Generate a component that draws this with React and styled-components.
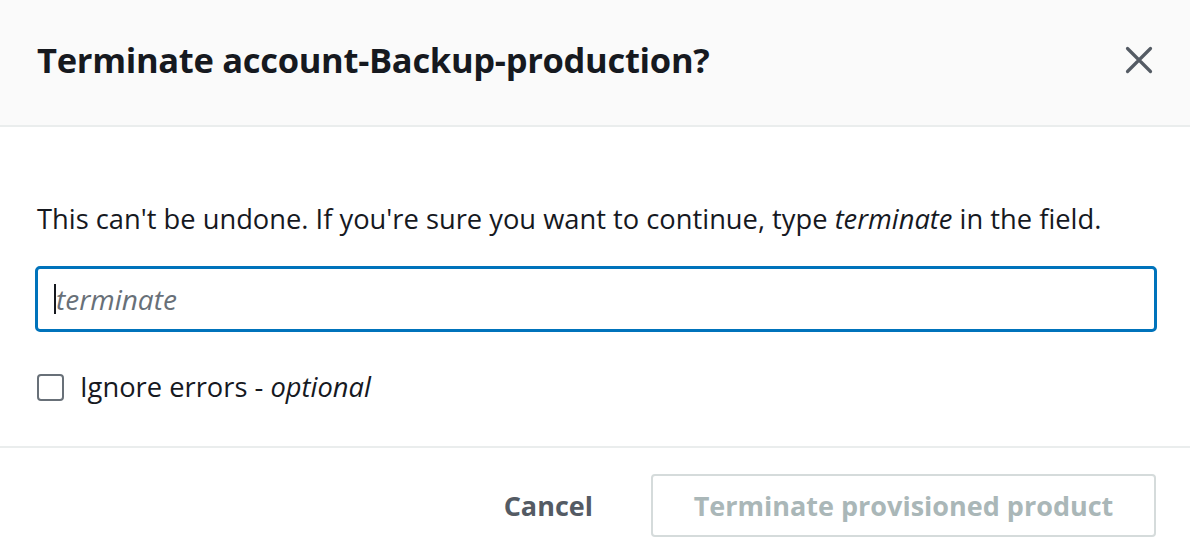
import styled, { createGlobalStyle } from "styled-components";

const GlobalStyle = createGlobalStyle`
  html, body {
    margin: 0;
    padding: 0;
    background: #ffffff;
    font-family: "Open Sans", "Noto Sans", Arial, sans-serif;
    color: #16191f;
  }
`;

const Modal = styled.div`
  width: 1190px;
  height: 558px;
  display: flex;
  flex-direction: column;
  background: #fff;
  overflow: hidden;
`;

const Header = styled.header`
  height: 127px;
  box-sizing: border-box;
  background: #fafafa;
  border-bottom: 2px solid #eaeded;
  display: flex;
  align-items: center;
  justify-content: space-between;
  padding: 0 37px 6px 37px;
`;

const Title = styled.h2`
  margin: 0;
  font-size: 34.5px;
  line-height: 40px;
  font-weight: 700;
  letter-spacing: -0.3px;
  color: #16191f;
`;

const CloseButton = styled.button`
  border: none;
  background: none;
  padding: 0;
  width: 32px;
  height: 32px;
  display: flex;
  align-items: center;
  justify-content: center;
  margin-right: -2px;
  cursor: pointer;
`;

const Body = styled.div`
  padding: 74px 35px 0 35px;
  height: 321px;
  box-sizing: border-box;
  border-bottom: 2px solid #eaeded;
`;

const Prompt = styled.p`
  margin: 0 0 0 2px;
  font-size: 27.3px;
  line-height: 36px;
  color: #16191f;
`;

const InputWrap = styled.div`
  position: relative;
  margin-top: 29px;
`;

const TextInput = styled.input`
  width: 1122px;
  height: 66px;
  box-sizing: border-box;
  border: 3px solid #0073bb;
  border-radius: 5px;
  padding: 0 18px;
  font-family: inherit;
  font-size: 28px;
  outline: none;
  &::placeholder {
    font-style: italic;
    color: #687078;
  }
`;

const Caret = styled.span`
  position: absolute;
  left: 19px;
  top: 18px;
  width: 2px;
  height: 30px;
  background: #16191f;
`;

const CheckRow = styled.label`
  display: flex;
  align-items: center;
  gap: 16px;
  margin-top: 39px;
  margin-left: 2px;
  font-size: 27.3px;
  line-height: 32px;
  color: #16191f;
  em {
    font-style: italic;
  }
`;

const Box = styled.span`
  width: 27px;
  height: 27px;
  box-sizing: border-box;
  border: 2px solid #687078;
  border-radius: 4px;
  background: #fff;
`;

const Footer = styled.footer`
  flex: 1;
  display: flex;
  align-items: center;
  justify-content: flex-end;
  gap: 58px;
  padding: 5px 34px 0 0;
`;

const TextButton = styled.button`
  border: none;
  background: none;
  font-family: inherit;
  font-size: 27px;
  font-weight: 700;
  color: #545b64;
  padding: 0;
`;

const PrimaryButton = styled.button`
  width: 505px;
  height: 63px;
  box-sizing: border-box;
  border: 2px solid #d5dbdb;
  border-radius: 4px;
  background: #fff;
  font-family: inherit;
  font-size: 27px;
  font-weight: 700;
  color: #aab7b8;
`;

export default function App() {
  return (
    <>
      <GlobalStyle />
      <Modal>
        <Header>
          <Title>Terminate account-Backup-production?</Title>
          <CloseButton aria-label="Close">
            <svg width="28" height="28" viewBox="0 0 28 28">
              <path
                d="M2.5 2.5 L25.5 25.5 M25.5 2.5 L2.5 25.5"
                stroke="#545b64"
                strokeWidth="3.2"
                strokeLinecap="round"
              />
            </svg>
          </CloseButton>
        </Header>
        <Body>
          <Prompt>
            This can't be undone. If you're sure you want to continue, type{" "}
            <em>terminate</em> in the field.
          </Prompt>
          <InputWrap>
            <TextInput placeholder="terminate" />
            <Caret />
          </InputWrap>
          <CheckRow>
            <Box />
            <span>
              Ignore errors - <em>optional</em>
            </span>
          </CheckRow>
        </Body>
        <Footer>
          <TextButton>Cancel</TextButton>
          <PrimaryButton disabled>Terminate provisioned product</PrimaryButton>
        </Footer>
      </Modal>
    </>
  );
}
